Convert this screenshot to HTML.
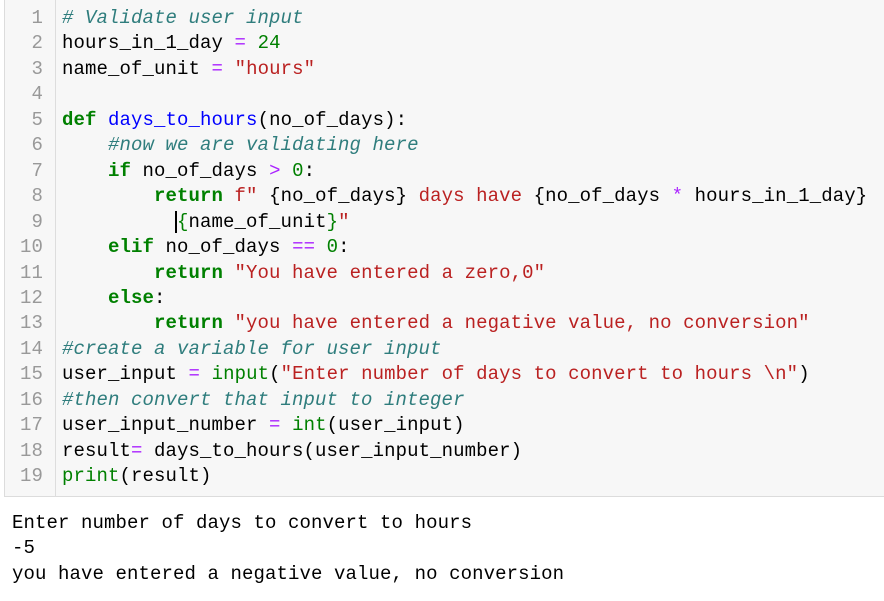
<!DOCTYPE html>
<html><head><style>
html,body{margin:0;padding:0;background:#fff;width:884px;height:601px;overflow:hidden}
.cell{position:absolute;left:4px;top:-2px;width:890px;height:499px;background:#f7f7f7;border:1px solid #dcdcdc;box-sizing:border-box}
.gut{position:absolute;left:4px;top:0;width:51px;height:497px;border-right:1px solid #ddd}
pre{margin:0;font-family:"Liberation Mono",monospace;font-size:19px;line-height:25.45px;letter-spacing:0.1px}
.nums{position:absolute;left:4px;top:6px;width:39px;text-align:right;color:#999}
.code{position:absolute;left:62px;top:6px;color:#000}
.out{position:absolute;left:12px;top:511px;color:#000}
.k{color:#008000;font-weight:bold}.f{color:#0000ff}.c{color:#2f7d7d;font-style:italic}
.s{color:#ba2121}.n{color:#008000}.o{color:#aa22ff}.b{color:#008000}
.cur{border-left:2px solid #000;margin-left:-2px}
</style></head><body>
<div class="cell"></div><div class="gut"></div>
<pre class="nums">1
2
3
4
5
6
7
8
9
10
11
12
13
14
15
16
17
18
19</pre>
<pre class="code"><span class="c"># Validate user input</span>
hours_in_1_day <span class="o">=</span> <span class="n">24</span>
name_of_unit <span class="o">=</span> <span class="s">"hours"</span>

<span class="k">def</span> <span class="f">days_to_hours</span>(no_of_days):
    <span class="c">#now we are validating here</span>
    <span class="k">if</span> no_of_days <span class="o">&gt;</span> <span class="n">0</span>:
        <span class="k">return</span> <span class="s">f" </span>{no_of_days}<span class="s"> days have </span>{no_of_days <span class="o">*</span> hours_in_1_day}
          <span class="cur"></span><span class="b">{</span>name_of_unit<span class="b">}</span><span class="s">"</span>
    <span class="k">elif</span> no_of_days <span class="o">==</span> <span class="n">0</span>:
        <span class="k">return</span> <span class="s">"You have entered a zero,0"</span>
    <span class="k">else</span>:
        <span class="k">return</span> <span class="s">"you have entered a negative value, no conversion"</span>
<span class="c">#create a variable for user input</span>
user_input <span class="o">=</span> <span class="b">input</span>(<span class="s">"Enter number of days to convert to hours \n"</span>)
<span class="c">#then convert that input to integer</span>
user_input_number <span class="o">=</span> <span class="b">int</span>(user_input)
result<span class="o">=</span> days_to_hours(user_input_number)
<span class="b">print</span>(result)</pre>
<pre class="out">Enter number of days to convert to hours
-5
you have entered a negative value, no conversion</pre>
</body></html>
